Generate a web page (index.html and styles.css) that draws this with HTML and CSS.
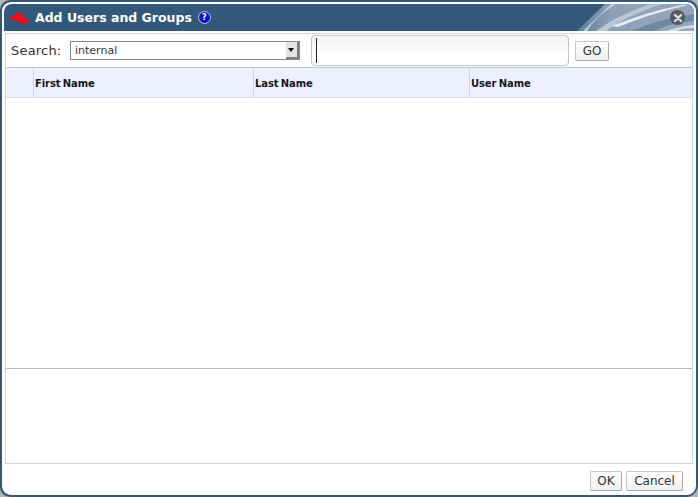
FILE: index.html
```html
<!DOCTYPE html>
<html lang="en">
<head>
    <meta charset="UTF-8">
    <title>Add Users and Groups</title>
    <link rel="stylesheet" href="styles.css">
</head>
<body>
    <div class="dialog">
        <div class="dialog-inner">
            <header class="dialog-header">
                <svg class="header-swoosh" width="128" height="27" viewBox="0 0 128 27">
                    <defs>
                        <linearGradient id="swooshFade" x1="0" y1="0" x2="1" y2="0">
                            <stop offset="0" stop-color="#5f7f9b"/>
                            <stop offset="0.3" stop-color="#8ea2b7"/>
                            <stop offset="1" stop-color="#93a5ba"/>
                        </linearGradient>
                    </defs>
                    <polygon points="11,27 39,0 128,0 128,27" fill="url(#swooshFade)"/>
                    <path d="M17 27 L41 4 L46 0 L50 0 Q30 12 21 27 Z" fill="#c3cfda"/>
                    <path d="M30 27 Q50 12 84 0 L96 0 Q60 12 40 27 Z" fill="#b9c6d3"/>
                    <path d="M46 22 Q80 8 116 1 L122 1 Q86 9 52 23 Z" fill="#e8ecf1"/>
                    <path d="M66 27 Q92 15 128 10 L128 17 Q104 19 88 27 Z" fill="#6f88a2"/>
                    <path d="M100 27 Q114 22 128 21 L128 24 Q118 24 110 27 Z" fill="#d5dce4"/>
                </svg>
                <svg class="logo" width="20" height="12" viewBox="0 0 20 12">
                    <path d="M6 1 Q8 0 10 .5 Q13 1 13.5 3.5 L14.500 5.500 Q19 7 19 9 Q19 11 15 11 Q9 11 5 8 L1.500 7 Q0 6 1 4.500 Q3 3.500 5 4.500 Z" fill="#e8101a"/>
                    <path d="M0 5.500 Q6 10 13 11.500 Q18 12.500 19 10.500 Q20 8.500 18.500 7.500 Q18 10.500 14 9.500 Q8 8.500 3 6 Z" fill="#d80e18"/>
                </svg>
                <h1 class="dialog-title">Add Users and Groups</h1>
                <span class="help-icon">?</span>
                <span class="close-btn">
                    <svg width="10" height="10" viewBox="0 0 10 10">
                        <path d="M2 2 L8 8 M8 2 L2 8" stroke="#dedede" stroke-width="2.4" stroke-linecap="round"/>
                    </svg>
                </span>
            </header>

            <div class="panel">
                <div class="search-bar">
                    <label class="search-label">Search:</label>
                    <div class="select-box">
                        <span class="select-value">internal</span>
                        <span class="select-arrow"></span>
                    </div>
                    <div class="search-input"><span class="caret"></span></div>
                    <button class="btn go-btn">GO</button>
                </div>

                <div class="table-head">
                    <div class="col col-check"></div>
                    <div class="col col-first">First Name</div>
                    <div class="col col-last">Last Name</div>
                    <div class="col col-user">User Name</div>
                </div>
                <div class="table-body"></div>
                <div class="details"></div>
            </div>

            <footer class="dialog-footer">
                <button class="btn ok-btn">OK</button>
                <button class="btn cancel-btn">Cancel</button>
            </footer>
        </div>
    </div>
</body>
</html>
```

FILE: styles.css
```css
html, body {
    margin: 0;
    padding: 0;
}

body {
    width: 698px;
    height: 497px;
    background-color: #b5b5b5;
    font-family: "DejaVu Sans", sans-serif;
    overflow: hidden;
}

.dialog {
    box-sizing: border-box;
    width: 698px;
    height: 497px;
    padding: 2px 2px 2px 2px;
    background-color: #33597a;
    border-radius: 10px 10px 12px 10px;
}

.dialog-inner {
    box-sizing: border-box;
    height: 100%;
    padding: 2px 2px 0 2px;
    background-color: #ffffff;
    border-radius: 9px;
    display: flex;
    flex-direction: column;
}

.dialog-header {
    position: relative;
    flex: 0 0 27px;
    display: flex;
    align-items: center;
    background-color: #33597a;
    border-radius: 8px 8px 0 0;
    overflow: hidden;
}

.header-swoosh {
    position: absolute;
    right: 0;
    top: 0;
}

.logo {
    margin-left: 5px;
    margin-right: 6px;
}

.dialog-title {
    margin: 0 0 1px 0;
    font-size: 12.5px;
    font-weight: bold;
    color: #ffffff;
}

.help-icon {
    box-sizing: border-box;
    width: 13px;
    height: 13px;
    margin-left: 6px;
    border: 1px solid #b9c8ea;
    border-radius: 50%;
    background-color: #0a14d0;
    color: #ffffff;
    font-size: 8px;
    font-weight: bold;
    line-height: 11px;
    text-align: center;
}

.close-btn {
    position: absolute;
    right: 9px;
    top: 6px;
    width: 15px;
    height: 15px;
    border-radius: 50%;
    background-color: #55585c;
    display: flex;
    align-items: center;
    justify-content: center;
}

.panel {
    flex: 0 0 431px;
    box-sizing: border-box;
    margin: 2px 1px 0 1px;
    border: 1px solid #cbd8df;
    display: flex;
    flex-direction: column;
}

.search-bar {
    flex: 0 0 33px;
    display: flex;
    align-items: center;
    border-bottom: 1px solid #c0c6cc;
}

.search-label {
    margin-left: 5px;
    width: 59px;
    font-size: 13px;
    color: #333333;
    letter-spacing: 0.2px;
}

.select-box {
    box-sizing: border-box;
    width: 230px;
    height: 19px;
    border: 1px solid #888888;
    display: flex;
    align-items: center;
    justify-content: space-between;
    background-color: #ffffff;
    position: relative;
}

.select-value {
    margin-left: 4px;
    font-size: 11px;
    color: #333333;
}

.select-arrow {
    box-sizing: border-box;
    width: 13px;
    height: 17px;
    background-color: #e4e4e4;
    border-right: 2px solid #808080;
    border-bottom: 2px solid #808080;
    position: relative;
}

.select-arrow::after {
    content: "";
    position: absolute;
    left: 2px;
    top: 6px;
    border-left: 3px solid transparent;
    border-right: 3px solid transparent;
    border-top: 4px solid #111111;
}

.search-input {
    box-sizing: border-box;
    width: 258px;
    height: 31px;
    margin-left: 11px;
    border: 1px solid #c4c4c4;
    border-radius: 4px;
    background: linear-gradient(#f2f2f2, #ffffff 70%);
    display: flex;
    align-items: center;
    padding-left: 4px;
}

.caret {
    width: 1px;
    height: 25px;
    background-color: #222222;
}

.btn {
    box-sizing: border-box;
    height: 20px;
    padding: 0;
    border: 1px solid #c8c8c8;
    border-right-color: #a8a8a8;
    border-bottom-color: #a8a8a8;
    border-radius: 2px;
    background: linear-gradient(#ffffff, #f0f0f0);
    font-family: "DejaVu Sans", sans-serif;
    font-size: 12px;
    color: #333333;
}

.go-btn {
    width: 34px;
    margin-left: 6px;
}

.table-head {
    flex: 0 0 30px;
    display: flex;
    box-sizing: border-box;
    background-color: #eef0fe;
    border-bottom: 1px solid #dde1ea;
}

.col {
    box-sizing: border-box;
    padding: 2px 0 0 1px;
    border-right: 1px solid #cfd6e2;
    font-size: 10px;
    font-weight: bold;
    line-height: 27px;
    color: #15151f;
    letter-spacing: -0.1px;
    word-spacing: -1px;
}

.col-check {
    width: 28px;
}

.col-first {
    width: 220px;
}

.col-last {
    width: 216px;
}

.col-user {
    flex: 1;
    border-right: none;
}

.table-body {
    flex: 0 0 271px;
    border-bottom: 1px solid #b8b8b8;
    box-sizing: border-box;
}

.details {
    flex: 1;
}

.dialog-footer {
    flex: 1;
    display: flex;
    justify-content: flex-end;
    align-items: flex-start;
    gap: 4px;
    padding: 7px 11px 0 0;
}

.ok-btn {
    width: 32px;
}

.cancel-btn {
    width: 57px;
}
```
